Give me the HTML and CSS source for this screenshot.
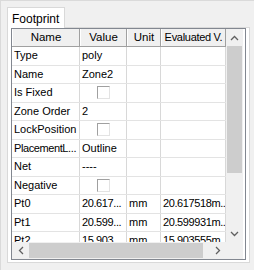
FILE: index.html
```html
<!DOCTYPE html>
<html lang="en">
<head>
  <meta charset="UTF-8" />
  <title>Footprint properties</title>
  <link rel="stylesheet" href="styles.css">
</head>
<body>
  <div class="window">
    <div class="tabs">
      <div class="tab">Footprint</div>
    </div>

    <div class="panel">
      <div class="grid">
        <div class="view">
          <div class="table">
            <div class="row head">
              <div class="cell">Name</div>
              <div class="cell">Value</div>
              <div class="cell">Unit</div>
              <div class="cell tight">Evaluated V.</div>
            </div>
            <div class="row">
              <div class="cell">Type</div>
              <div class="cell">poly</div>
              <div class="cell"></div>
              <div class="cell"></div>
            </div>
            <div class="row">
              <div class="cell">Name</div>
              <div class="cell">Zone2</div>
              <div class="cell"></div>
              <div class="cell"></div>
            </div>
            <div class="row">
              <div class="cell">Is Fixed</div>
              <div class="cell center"><span class="check"></span></div>
              <div class="cell"></div>
              <div class="cell"></div>
            </div>
            <div class="row">
              <div class="cell">Zone Order</div>
              <div class="cell">2</div>
              <div class="cell"></div>
              <div class="cell"></div>
            </div>
            <div class="row">
              <div class="cell">LockPosition</div>
              <div class="cell center"><span class="check"></span></div>
              <div class="cell"></div>
              <div class="cell"></div>
            </div>
            <div class="row">
              <div class="cell tight">PlacementL...</div>
              <div class="cell">Outline</div>
              <div class="cell"></div>
              <div class="cell"></div>
            </div>
            <div class="row">
              <div class="cell">Net</div>
              <div class="cell">----</div>
              <div class="cell"></div>
              <div class="cell"></div>
            </div>
            <div class="row">
              <div class="cell">Negative</div>
              <div class="cell center"><span class="check"></span></div>
              <div class="cell"></div>
              <div class="cell"></div>
            </div>
            <div class="row">
              <div class="cell">Pt0</div>
              <div class="cell tight">20.617...</div>
              <div class="cell">mm</div>
              <div class="cell tight">20.617518m...</div>
            </div>
            <div class="row">
              <div class="cell">Pt1</div>
              <div class="cell tight">20.599...</div>
              <div class="cell">mm</div>
              <div class="cell tight">20.599931m...</div>
            </div>
            <div class="row">
              <div class="cell">Pt2</div>
              <div class="cell tight">15.903...</div>
              <div class="cell">mm</div>
              <div class="cell tight">15.903555m...</div>
            </div>
          </div>

          <div class="vscroll">
            <div class="arrow">
              <svg width="9" height="6" viewBox="0 0 9 6"><path d="M1 5 L4.5 1.5 L8 5" fill="none" stroke="#606060" stroke-width="1.3"/></svg>
            </div>
            <div class="track"><div class="thumb"></div></div>
            <div class="arrow">
              <svg width="9" height="6" viewBox="0 0 9 6"><path d="M1 1 L4.5 4.5 L8 1" fill="none" stroke="#606060" stroke-width="1.3"/></svg>
            </div>
          </div>
        </div>

        <div class="hbar">
          <div class="hscroll">
            <div class="arrow">
              <svg width="6" height="9" viewBox="0 0 6 9"><path d="M5 1 L1.5 4.5 L5 8" fill="none" stroke="#606060" stroke-width="1.3"/></svg>
            </div>
            <div class="track"><div class="thumb"></div></div>
            <div class="arrow">
              <svg width="6" height="9" viewBox="0 0 6 9"><path d="M1 1 L4.5 4.5 L1 8" fill="none" stroke="#606060" stroke-width="1.3"/></svg>
            </div>
          </div>
          <div class="corner"></div>
        </div>
      </div>
    </div>
  </div>
</body>
</html>
```

FILE: styles.css
```css
body {
  margin: 0;
  background-color: #f0f0f0;
  font-family: 'Liberation Sans', Arial, sans-serif;
  font-size: 11px;
  color: #000;
}

.window {
  width: 254px;
  height: 270px;
  box-sizing: border-box;
  border-top: 1px solid #dadada;
  border-left: 1px solid #dadada;
  padding: 6px 0 0 6px;
}

/* tab strip */
.tabs {
  display: flex;
  height: 20px;
}

.tab {
  box-sizing: border-box;
  height: 21px;
  padding: 4px 5px 0 4px;
  background: #fff;
  border: 1px solid #d9d9d9;
  border-bottom: none;
  font-size: 12px;
  position: relative;
  z-index: 1;
}

.panel {
  box-sizing: border-box;
  width: 243px;
  height: 236px;
  background: #fff;
  border: 1px solid #d9d9d9;
  padding: 0 3px 2px 3px;
}

/* property grid */
.grid {
  box-sizing: border-box;
  height: 100%;
  border: 1px solid #828790;
  display: flex;
  flex-direction: column;
}

.view {
  flex: 1;
  display: flex;
  overflow: hidden;
}

.table {
  width: 214px;
  overflow: hidden;
}

.row {
  display: grid;
  grid-template-columns: 68px 47px 34px 65px;
  height: 18.5px;
  box-sizing: border-box;
  border-bottom: 1px solid #e3e3e3;
}

.cell {
  border-right: 1px solid #d8d8d8;
  padding: 0 2px;
  line-height: 17px;
  white-space: nowrap;
  overflow: hidden;
}

.cell.tight {
  letter-spacing: -0.4px;
  padding-right: 0;
}

.cell.center {
  display: flex;
  align-items: center;
  justify-content: center;
}

.row.head {
  height: 18px;
  background: #f0f0f0;
  border-bottom: 1px solid #a0a0a0;
}

.row.head .cell {
  text-align: center;
  border-right: 1px solid #a0a0a0;
  border-left: 1px solid #fff;
  font-size: 11.5px;
}

.row.head .cell.tight {
  font-size: 11px;
  padding: 0 1px;
  letter-spacing: -0.3px;
}

.check {
  width: 11px;
  height: 11px;
  background: #fff;
  border-top: 1px solid #a0a0a0;
  border-left: 1px solid #a0a0a0;
  border-right: 1px solid #e3e3e3;
  border-bottom: 1px solid #e3e3e3;
}

/* scrollbars */
.vscroll {
  width: 17px;
  background: #f0f0f0;
  display: flex;
  flex-direction: column;
}

.vscroll .arrow {
  height: 17px;
  display: flex;
  align-items: center;
  justify-content: center;
}

.vscroll .track {
  flex: 1;
  padding: 0 1px;
}

.vscroll .thumb {
  height: 127px;
  background: #cdcdcd;
}

.hbar {
  display: flex;
  height: 17px;
}

.hscroll {
  width: 214px;
  background: #f0f0f0;
  display: flex;
}

.hscroll .arrow {
  width: 17px;
  display: flex;
  align-items: center;
  justify-content: center;
}

.hscroll .track {
  flex: 1;
  padding: 1px 0;
}

.hscroll .thumb {
  width: 174px;
  height: 100%;
  background: #cdcdcd;
}

.corner {
  width: 17px;
  background: #f0f0f0;
}
```
